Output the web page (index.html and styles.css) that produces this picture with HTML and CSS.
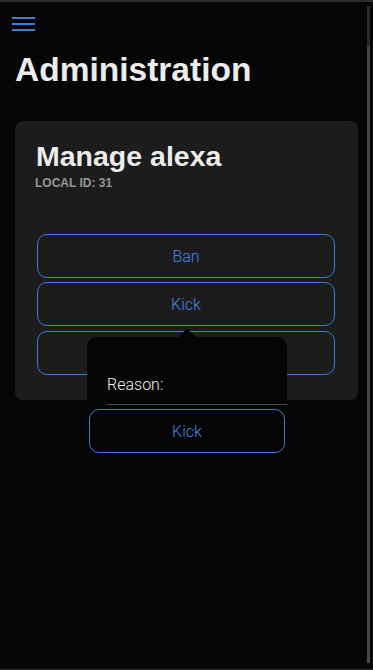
FILE: index.html
```html
<!DOCTYPE html>
<html lang="en">
<head>
<meta charset="utf-8">
<title>Administration</title>
<link rel="stylesheet" href="styles.css">
</head>
<body>
<div class="frame">
  <main class="main">
    <button class="menu" aria-label="Menu">
      <svg width="23" height="14" viewBox="0 0 23 14">
        <rect x="0" y="0" width="23" height="2" fill="#3b7ddd"/>
        <rect x="0" y="6" width="23" height="2" fill="#3b7ddd"/>
        <rect x="0" y="12" width="23" height="2" fill="#3b7ddd"/>
      </svg>
    </button>
    <h1 class="page-title">Administration</h1>
    <section class="card">
      <h2 class="card-title">Manage alexa</h2>
      <div class="card-sub">LOCAL ID: 31</div>
      <div class="actions">
        <button class="btn">Ban</button>
        <button class="btn">Kick</button>
        <button class="btn btn-last">Mute</button>
      </div>
    </section>
  </main>
  <div class="scrollbar"><div class="track"></div><div class="thumb"></div></div>
</div>
<div class="popover">
  <div class="field">
    <label class="field-label" for="reason">Reason:</label>
    <input class="field-input" id="reason" type="text">
  </div>
  <button class="btn btn-pop">Kick</button>
</div>
</body>
</html>
```
FILE: styles.css
```css
html, body {
  margin: 0;
  padding: 0;
  background: #050505;
}
body {
  font-family: "Liberation Sans", Arial, sans-serif;
  color: #ececec;
}
.frame {
  height: 670px;
  box-sizing: border-box;
  border-top: 2px solid #2c2c2c;
  border-bottom: 1px solid #333333;
  display: flex;
}
.main {
  flex: 1;
  display: flex;
  flex-direction: column;
  align-items: flex-start;
}
.menu {
  margin: 15px 0 0 12px;
  padding: 0;
  border: 0;
  background: none;
  width: 23px;
  height: 14px;
  display: block;
}
.menu svg { display: block; }
.page-title {
  margin: 19px 0 0 15px;
  font-size: 33.5px;
  line-height: 40px;
  font-weight: 700;
  color: #ececec;
}
.card {
  margin: 31px 0 0 15px;
  width: 343px;
  box-sizing: border-box;
  background: #1c1c1c;
  border-radius: 8px;
  padding: 19px 20px 25px 20px;
}
.card-title {
  margin: 0 0 0 1px;
  font-size: 28.5px;
  line-height: 32px;
  font-weight: 700;
  color: #ececec;
}
.card-sub {
  margin-top: 4px;
  font-size: 12px;
  line-height: 14px;
  font-weight: 700;
  color: #979797;
}
.actions {
  margin-top: 44px;
  display: flex;
  flex-direction: column;
  gap: 4px;
  padding: 0 3px 0 2px;
}
.btn {
  height: 44px;
  box-sizing: border-box;
  border: 1px solid #3a7ad8;
  border-radius: 10px;
  background: transparent;
  color: #4286e8;
  font-family: Roboto, "Liberation Sans", sans-serif;
  font-weight: 300;
  font-size: 16px;
  display: flex;
  align-items: center;
  justify-content: center;
  padding: 0;
}
.btn-last { margin-top: 1px; }
.scrollbar {
  width: 3px;
  margin: 4px 3px 6px 0;
  display: flex;
  flex-direction: column;
}
.track {
  height: 40px;
  background: #2a2a2a;
}
.thumb {
  flex: 1;
  background: #474747;
}
.popover {
  position: absolute;
  left: 87px;
  top: 337px;
  width: 200px;
  background: #050505;
  border-radius: 10px;
  padding: 0 0 4px;
  display: flex;
  flex-direction: column;
}
.popover::before {
  content: "";
  position: absolute;
  left: 94px;
  top: -6px;
  width: 12px;
  height: 12px;
  background: #050505;
  border-radius: 2px;
  transform: rotate(45deg);
}
.field {
  position: relative;
  padding: 38px 0 0 20px;
  display: flex;
  flex-direction: column;
}
.field-label {
  font-family: Roboto, "Liberation Sans", sans-serif;
  font-weight: 300;
  font-size: 16px;
  line-height: 20px;
  color: #f2f2f2;
}
.field-input {
  height: 9px;
  margin: 0;
  padding: 0;
  border: 0;
  border-bottom: 1px solid #4a4a4a;
  background: transparent;
  outline: none;
}
.btn-pop {
  margin: 4px 2px 0;
  width: 196px;
}
```
